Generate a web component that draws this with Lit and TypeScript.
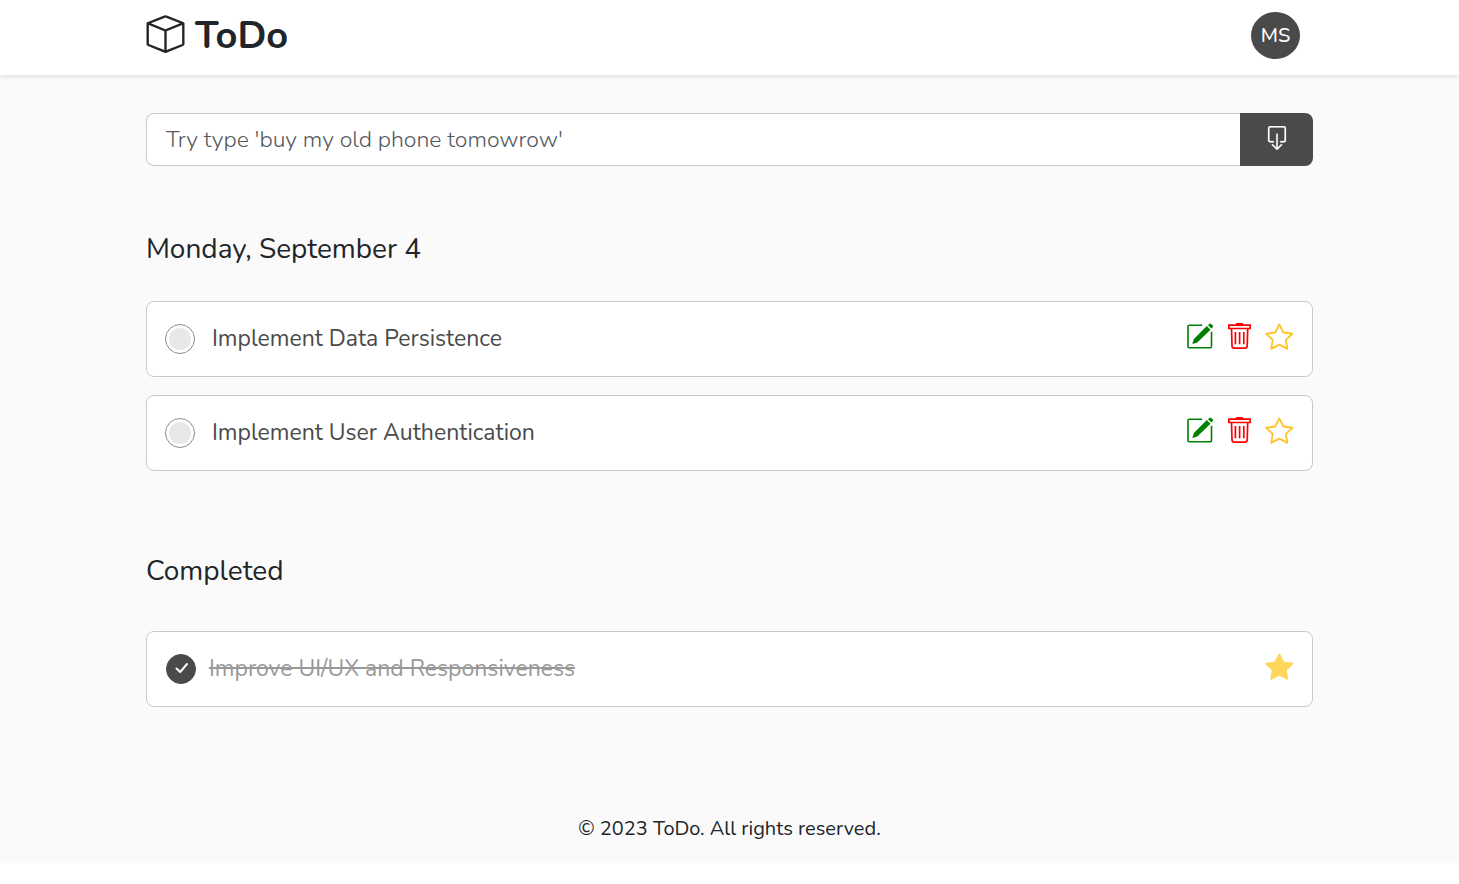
import { LitElement, html, css, svg, nothing } from "lit";
import { customElement, property, state } from "lit/decorators.js";
import { classMap } from "lit/directives/class-map.js";

interface Task {
  id: number;
  title: string;
  done: boolean;
  starred: boolean;
}

const boxIcon = html`<svg class="logo-icon" viewBox="0 0 16 16" fill="currentColor" aria-hidden="true">
  <path d="M8.186 1.113a.5.5 0 0 0-.372 0L1.846 3.5 8 5.961 14.154 3.5 8.186 1.113zM15 4.239l-6.5 2.6v7.922l6.5-2.6V4.24zM7.5 14.762V6.838L1 4.239v7.923l6.5 2.6zM7.443.184a1.5 1.5 0 0 1 1.114 0l7.129 2.852A.5.5 0 0 1 16 3.5v8.662a1 1 0 0 1-.629.928l-7.185 2.874a.5.5 0 0 1-.372 0L.63 13.09a1 1 0 0 1-.63-.928V3.5a.5.5 0 0 1 .314-.464L7.443.184z"/>
</svg>`;

const addIcon = html`<svg class="add-icon" viewBox="0 0 16 16" fill="currentColor" stroke="currentColor" stroke-width=".15" aria-hidden="true">
  <path d="M3.5 10a.5.5 0 0 1-.5-.5v-8a.5.5 0 0 1 .5-.5h9a.5.5 0 0 1 .5.5v8a.5.5 0 0 1-.5.5h-2a.5.5 0 0 0 0 1h2A1.5 1.5 0 0 0 14 9.5v-8A1.5 1.5 0 0 0 12.5 0h-9A1.5 1.5 0 0 0 2 1.5v8A1.5 1.5 0 0 0 3.5 11h2a.5.5 0 0 0 0-1h-2z"/>
  <path d="M7.646 15.854a.5.5 0 0 0 .708 0l3-3a.5.5 0 0 0-.708-.708L8.5 14.293V5.5a.5.5 0 0 0-1 0v8.793l-2.146-2.147a.5.5 0 0 0-.708.708l3 3z"/>
</svg>`;

const editIcon = html`<svg class="icon" viewBox="0 0 28 28" aria-hidden="true">
  <path d="M16.2 2.200H3.2Q2 2.200 2 3.400V23.500Q2 24.700 3.200 24.700H24.300Q25.500 24.700 25.500 23.500V8.800" fill="none" stroke="currentColor" stroke-width="1.600"/>
  <path d="M20.800 3.100L24.500 6.800L11.300 19.500L6.300 21.100L7.900 16Z" fill="currentColor"/>
  <path d="M22 2.200L23.700.7Q24.500.2 25.200.9L26.900 2.600Q27.400 3.300 26.900 4L25.400 5.600Z" fill="currentColor"/>
</svg>`;

const trashIcon = html`<svg class="icon" viewBox="0 0 28 28" fill="none" stroke="currentColor" stroke-width="1.700" aria-hidden="true">
  <path d="M9.700 2.200V1.400Q9.700 0 11.100 0H15.900Q17.300 0 17.300 1.400V2.200Z" fill="currentColor" stroke="none"/>
  <path d="M2.900 2.200H24.100V5.500H2.900Z"/>
  <path d="M5.500 5.500L6 23Q6.100 25.200 8.300 25.200H18.900Q21.100 25.200 21.200 23L21.700 5.500M9.400 9V21.300M13.600 9V21.300M17.800 9V21.300"/>
</svg>`;

const starPath = svg`<path d="M2.866 14.850c-.078.444.36.791.746.593l4.390-2.256 4.389 2.256c.386.198.824-.149.746-.592l-.830-4.730 3.522-3.356c.330-.314.160-.888-.282-.950l-4.898-.696L8.465.792a.513.513 0 0 0-.927 0L5.354 5.120l-4.898.696c-.441.062-.612.636-.283.950l3.523 3.356-.830 4.730zm4.905-2.767-3.686 1.894.694-3.957a.565.565 0 0 0-.163-.505L1.710 6.745l4.052-.576a.525.525 0 0 0 .393-.288L8 2.223l1.847 3.658a.525.525 0 0 0 .393.288l4.052.575-2.906 2.770a.565.565 0 0 0-.163.506l.694 3.957-3.686-1.894a.503.503 0 0 0-.461 0z"/>`;

const starFillPath = svg`<path d="M3.612 15.443c-.386.198-.824-.149-.746-.592l.830-4.730L.173 6.765c-.329-.314-.158-.888.283-.950l4.898-.696L7.538.792c.197-.390.730-.390.927 0l2.184 4.327 4.898.696c.441.062.612.636.282.950l-3.522 3.356.830 4.730c.078.443-.360.790-.746.592L8 13.187l-4.389 2.256z"/>`;

@customElement("todo-item")
export class TodoItem extends LitElement {
  @property({ attribute: false }) task!: Task;

  static styles = css`
    :host { display: block; }
    .card {
      display: flex;
      align-items: center;
      min-height: 76px;
      padding: 0 18px;
      box-sizing: border-box;
      background: #fff;
      border: 1px solid #c9c9c9;
      border-radius: 8px;
    }
    .check { display: grid; place-items: center; flex: none; }
    .tick, .mark { grid-area: 1 / 1; }
    .tick {
      appearance: none;
      box-sizing: border-box;
      width: 30px;
      height: 30px;
      margin: 0;
      padding: 3px;
      border: 1px solid #8c8c8c;
      border-radius: 50%;
      background: #e8e8e8 content-box;
      cursor: pointer;
    }
    .tick:checked { border-color: #4a4a4a; background: #4a4a4a; }
    .mark { width: 16px; height: 16px; pointer-events: none; }
    .title {
      flex: 1;
      min-width: 0;
      padding-left: 17px;
      font-size: 23px;
      line-height: 32px;
      color: #4a4a4a;
      cursor: pointer;
    }
    .done { padding-left: 19px; }
    .done .title { padding-left: 13px; color: #999; text-decoration: line-through; }
    .actions { display: flex; gap: 12px; padding-bottom: 4px; }
    .action {
      display: block;
      padding: 0;
      border: 0;
      background: none;
      cursor: pointer;
    }
    .icon { display: block; width: 28px; height: 28px; overflow: visible; }
    .edit { color: #008000; }
    .remove { color: #f00; }
    .star { color: #ffc42e; }
    .done .star { color: #ffd65c; }
  `;

  private emit(kind: string) {
    this.dispatchEvent(new CustomEvent("task-action", { detail: { kind, id: this.task.id } }));
  }

  render() {
    const { id, title, done, starred } = this.task;
    return html`<div class=${classMap({ card: true, done })}>
      <span class="check">
        <input class="tick" type="checkbox" id="task-${id}" .checked=${done} @change=${() => this.emit("toggle")} />
        ${done
          ? html`<svg class="mark" viewBox="0 0 16 16" fill="none" stroke="#fff" stroke-width="2" stroke-linecap="round" stroke-linejoin="round" aria-hidden="true"><path d="M3.500 7.500L7.200 11L14 3"/></svg>`
          : nothing}
      </span>
      <label class="title" for="task-${id}">${title}</label>
      <div class="actions">
        ${done
          ? nothing
          : html`<button class="action edit" type="button" aria-label="Edit ${title}">${editIcon}</button>
              <button class="action remove" type="button" aria-label="Delete ${title}" @click=${() => this.emit("remove")}>${trashIcon}</button>`}
        <button class="action star" type="button" aria-label="Star ${title}" aria-pressed=${starred ? "true" : "false"} @click=${() => this.emit("star")}>
          <svg class="icon" viewBox="0.4 0.2 16 16" fill="currentColor" aria-hidden="true">${starred ? starFillPath : starPath}</svg>
        </button>
      </div>
    </div>`;
  }
}

@customElement("app-root")
export class AppRoot extends LitElement {
  @state() private tasks: Task[] = [
    { id: 1, title: "Implement Data Persistence", done: false, starred: false },
    { id: 2, title: "Implement User Authentication", done: false, starred: false },
    { id: 3, title: "Improve UI/UX and Responsiveness", done: true, starred: true },
  ];

  static styles = css`
    :host {
      display: block;
      font-family: Nunito, Lato, "Open Sans", sans-serif;
      color: #212529;
      background: #fafafa;
    }
    .header {
      display: flex;
      align-items: center;
      justify-content: space-between;
      height: 75px;
      padding: 0 10%;
      background: #fff;
      box-shadow: 0 2px 4px rgba(0, 0, 0, 0.1);
    }
    .brand {
      display: flex;
      align-items: center;
      gap: 10px;
      padding-bottom: 4px;
      color: inherit;
      text-decoration: none;
      font-size: 38px;
      line-height: 48px;
      font-weight: 700;
    }
    .logo-icon { width: 39px; height: 38px; margin-bottom: 4px; }
    .avatar {
      width: 49px;
      height: 47px;
      margin: 0 13px 4px 0;
      padding: 0;
      border: 0;
      border-radius: 50%;
      background: #4a4a4a;
      color: #fff;
      font: inherit;
      font-size: 20px;
      line-height: 24px;
      font-weight: 500;
    }
    .main { padding: 38px 10% 0; }
    .entry { display: flex; height: 53px; }
    .field {
      flex: 1;
      min-width: 0;
      box-sizing: border-box;
      padding: 0 19px;
      border: 1px solid #c9c9c9;
      border-right: 0;
      border-radius: 8px 0 0 8px;
      background: #fff;
      color: #4a4a4a;
      font: inherit;
      font-size: 23px;
      font-weight: 300;
    }
    .field::placeholder { color: #55595e; opacity: 1; }
    .add {
      display: grid;
      place-items: center;
      width: 73px;
      padding: 0 0 3px;
      border: 0;
      border-radius: 0 8px 8px 0;
      background: #4a4a4a;
      color: #fff;
    }
    .add-icon { width: 24px; height: 24px; }
    .heading {
      margin: 0;
      padding: 65px 0 34px;
      font-size: 28px;
      line-height: 36px;
      font-weight: 400;
    }
    .heading-done { padding: 82px 0 42px; }
    .list { display: grid; gap: 18px; }
    .footer {
      padding: 108px 10% 20px;
      text-align: center;
      font-size: 20px;
      line-height: 28px;
    }
  `;

  private onAction(e: CustomEvent<{ kind: string; id: number }>) {
    const { kind, id } = e.detail;
    this.tasks =
      kind === "remove"
        ? this.tasks.filter((t) => t.id !== id)
        : this.tasks.map((t) =>
            t.id !== id ? t : kind === "star" ? { ...t, starred: !t.starred } : { ...t, done: !t.done },
          );
  }

  private addTask(e: Event) {
    e.preventDefault();
    const form = e.target as HTMLFormElement;
    const field = form.querySelector("input")!;
    const title = field.value.trim();
    if (!title) return;
    this.tasks = [...this.tasks, { id: Date.now(), title, done: false, starred: false }];
    form.reset();
  }

  private renderList(done: boolean) {
    return html`<div class="list">
      ${this.tasks
        .filter((t) => t.done === done)
        .map((t) => html`<todo-item .task=${t} @task-action=${this.onAction}></todo-item>`)}
    </div>`;
  }

  render() {
    return html`
      <header class="header">
        <a class="brand" href="#">${boxIcon}<span>ToDo</span></a>
        <button class="avatar" type="button">MS</button>
      </header>
      <main class="main">
        <form class="entry" @submit=${this.addTask}>
          <input class="field" type="text" aria-label="New task" placeholder="Try type 'buy my old phone tomowrow'" />
          <button class="add" type="submit" aria-label="Add task">${addIcon}</button>
        </form>
        <h2 class="heading">Monday, September 4</h2>
        ${this.renderList(false)}
        <h2 class="heading heading-done">Completed</h2>
        ${this.renderList(true)}
      </main>
      <footer class="footer">© 2023 ToDo. All rights reserved.</footer>
    `;
  }
}
